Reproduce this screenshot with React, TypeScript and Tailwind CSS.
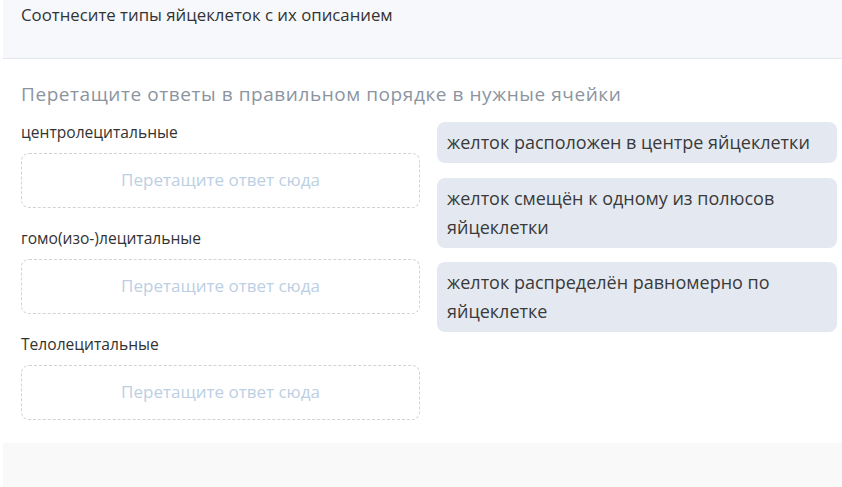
import React from 'react';

const slots = ['центролецитальные', 'гомо(изо-)лецитальные', 'Телолецитальные'];

const answers = [
  'желток расположен в центре яйцеклетки',
  'желток смещён к одному из полюсов яйцеклетки',
  'желток распределён равномерно по яйцеклетке',
];

function DropZone() {
  return (
    <div className="flex h-[55px] items-center justify-center rounded-lg border border-dashed border-[#cfd3d8] pb-[2px] text-[17px] text-[#bccfe3]">
      Перетащите ответ сюда
    </div>
  );
}

export default function App() {
  return (
    <div className="min-h-[487px] bg-white font-['Open_Sans',sans-serif] text-[#333]">
      <div className="ml-[3px] h-[59px] border-b border-[#e2e6eb] bg-[#f6f8fb] px-[18px] pt-[3px] text-[16.8px] leading-[24px]">
        Соотнесите типы яйцеклеток с их описанием
      </div>

      <div className="pt-[23px] pr-[5px] pb-[23px] pl-[21px]">
        <h2 className="text-[19px] leading-[24px] font-medium tracking-[0.03em] text-[#8b949f]">
          Перетащите ответы в правильном порядке в нужные ячейки
        </h2>

        <div className="mt-[16px] flex gap-[17px]">
          <div className="flex w-[399px] shrink-0 flex-col gap-[20px]">
            {slots.map((label) => (
              <div key={label} className="flex flex-col gap-[11px]">
                <div className="text-[15.6px] leading-[20px]">{label}</div>
                <DropZone />
              </div>
            ))}
          </div>

          <div className="flex w-[400px] shrink-0 flex-col gap-[14.5px]">
            {answers.map((text) => (
              <div
                key={text}
                className="rounded-lg bg-[#e4e9f1] px-[10px] py-[6px] text-[18px] leading-[29px] text-[#3a3a3a]"
              >
                {text}
              </div>
            ))}
          </div>
        </div>
      </div>

      <div className="ml-[3px] h-[45px] bg-[#f9f9f9]" />
    </div>
  );
}
